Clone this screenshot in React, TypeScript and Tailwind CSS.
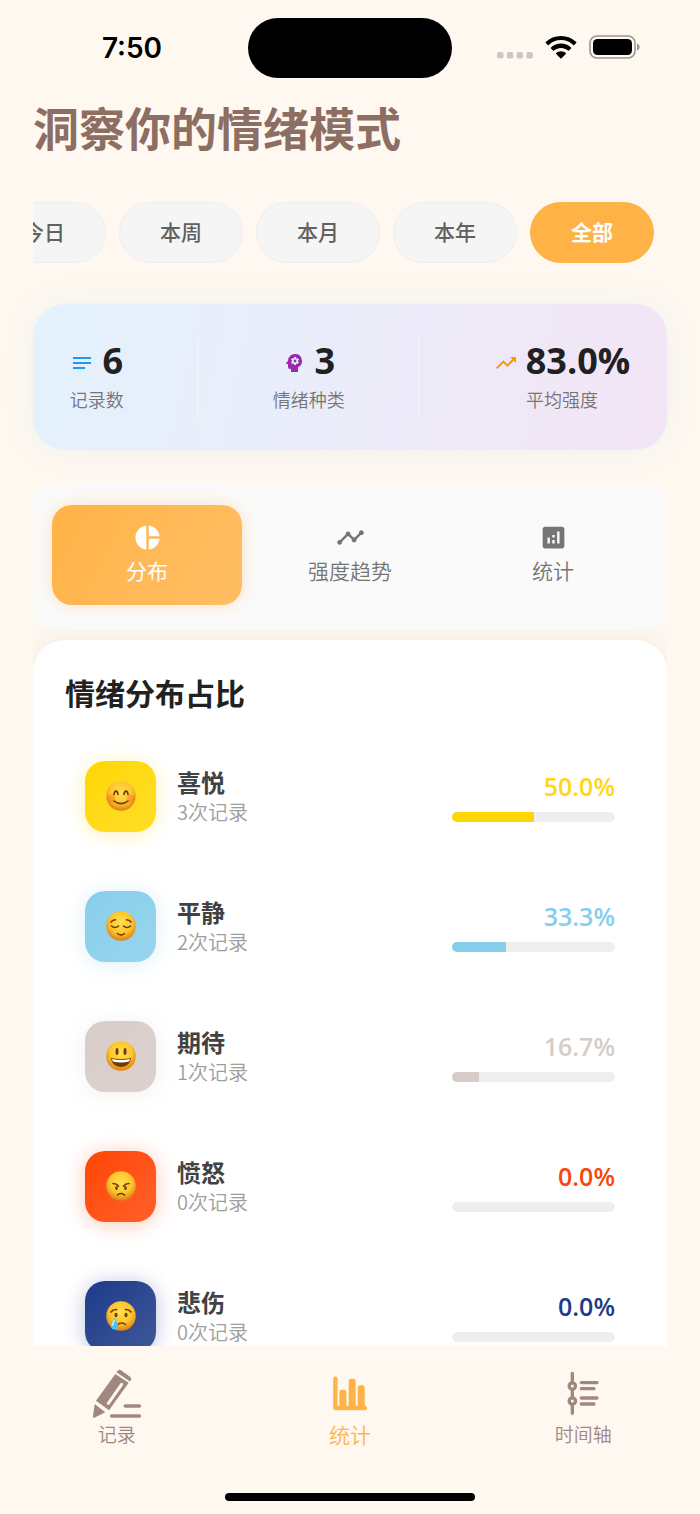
import { useState, type ReactNode } from "react";
import { MdAnalytics, MdNotes, MdPieChart, MdPsychology, MdTimeline, MdTrendingUp } from "react-icons/md";

const periods = ["今日", "本周", "本月", "本年", "全部"];

const tabs = [
  { label: "分布", icon: MdPieChart },
  { label: "强度趋势", icon: MdTimeline },
  { label: "统计", icon: MdAnalytics }
];

type Mood = "joy" | "calm" | "expect" | "angry" | "sad";

const moods: { mood: Mood; name: string; count: number; percent: number; tile: string; bar: string; text: string }[] = [
  {
    mood: "joy",
    name: "喜悦",
    count: 3,
    percent: 50,
    tile: "from-[#ffd700] to-[#ffdd26] shadow-[0_2px_20px_rgba(255,215,0,0.3)]",
    bar: "bg-[#ffd700]",
    text: "text-[#ffd61a]"
  },
  {
    mood: "calm",
    name: "平静",
    count: 2,
    percent: 33.3,
    tile: "from-[#87ceeb] to-[#98d5ee] shadow-[0_2px_20px_rgba(135,206,235,0.3)]",
    bar: "bg-[#87ceeb]",
    text: "text-[#87ceeb]"
  },
  {
    mood: "expect",
    name: "期待",
    count: 1,
    percent: 16.7,
    tile: "from-[#d7ccc8] to-[#dbd2cf] shadow-[0_2px_20px_rgba(215,204,200,0.3)]",
    bar: "bg-[#d7ccc8]",
    text: "text-[#d7ccc8]"
  },
  {
    mood: "angry",
    name: "愤怒",
    count: 0,
    percent: 0,
    tile: "from-[#ff4500] to-[#ff6028] shadow-[0_2px_20px_rgba(255,69,0,0.3)]",
    bar: "bg-[#ff4500]",
    text: "text-[#f8470c]"
  },
  {
    mood: "sad",
    name: "悲伤",
    count: 0,
    percent: 0,
    tile: "from-[#1e3a8a] to-[#405899] shadow-[0_2px_20px_rgba(30,58,138,0.3)]",
    bar: "bg-[#1e3a8a]",
    text: "text-[#1e3a8a]"
  }
];

const faces: Record<Mood, ReactNode> = {
  joy: (
    <>
      <circle cx="5" cy="17.500" r="4" fill="#ff5a1f" stroke="none" opacity="0.35" />
      <circle cx="25" cy="17.500" r="4" fill="#ff5a1f" stroke="none" opacity="0.35" />
      <path d="M8 13.500c.5-4.500 3.500-4.500 4 0M18 13.500c.5-4.500 3.500-4.500 4 0" />
      <path d="M8 20c4 3.500 10 3.500 14 0" />
    </>
  ),
  calm: (
    <>
      <path d="M5 11c1-1.500 2.500-2.200 4.500-2.200M25 11c-1-1.500-2.500-2.200-4.500-2.200" />
      <path d="M5.500 15c2 1.800 5 1.800 7 0M17.500 15c2 1.800 5 1.800 7 0" />
      <path d="M11.500 22.500c2 1.600 5 1.600 7 0" />
    </>
  ),
  expect: (
    <>
      <ellipse cx="11" cy="10.500" rx="1.500" ry="3.500" fill="#6b3b0a" stroke="none" />
      <ellipse cx="19" cy="10.500" rx="1.500" ry="3.500" fill="#6b3b0a" stroke="none" />
      <path d="M5 17c6 1.500 14 1.500 20 0c-.5 5.500-4.500 9-10 9s-9.500-3.500-10-9z" fill="#6b3b0a" stroke="none" />
      <path d="M6 18c6 1.300 12 1.300 18 0l-.8 2.500c-5 1.200-11.400 1.200-16.400 0z" fill="#fff" stroke="none" />
    </>
  ),
  angry: (
    <>
      <path d="M7 12.500c1.800 0 4.200 1 5.500 2.600M23 12.500c-1.800 0-4.200 1-5.500 2.600" />
      <ellipse cx="10.500" cy="17" rx="1.300" ry="2" fill="#6b3b0a" stroke="none" />
      <ellipse cx="19.500" cy="17" rx="1.300" ry="2" fill="#6b3b0a" stroke="none" />
      <path d="M11.500 24c1.800-2 5.200-2 7 0" />
    </>
  ),
  sad: (
    <>
      <path d="M5 11c1.300-1.800 3-2.600 5.500-2.400M25 11c-1.300-1.800-3-2.600-5.500-2.400" />
      <ellipse cx="10" cy="14" rx="1.500" ry="2.200" fill="#6b3b0a" stroke="none" />
      <ellipse cx="20" cy="14" rx="1.500" ry="2.200" fill="#6b3b0a" stroke="none" />
      <path d="M12 23.500c1.800-2 5.500-2 7.500 0" />
      <path d="M8.500 17c-2 3.500-3.700 5.500-3.700 7.700a3.700 3.700 0 0 0 7.400 0c0-2.200-1.700-4.200-3.700-7.700z" fill="#4fc0f4" stroke="none" />
      <path d="M8.300 19.500c-1 2-2 3.500-2 5" stroke="#c8efff" />
    </>
  )
};

function Face({ mood }: { mood: Mood }) {
  return (
    <svg viewBox="0 0 30 30" className="size-[30px]" fill="none" stroke="#6b3b0a" strokeWidth="1.600" strokeLinecap="round" role="img" aria-label={mood}>
      <defs>
        <radialGradient id={`face-${mood}`} cx="0.5" cy="0.38" r="0.62">
          <stop offset="0" stopColor="#ffe04e" />
          <stop offset="0.6" stopColor="#fdc52e" />
          <stop offset="1" stopColor="#de7f12" />
        </radialGradient>
      </defs>
      <circle cx="15" cy="15" r="14.800" fill={`url(#face-${mood})`} stroke="none" />
      {faces[mood]}
    </svg>
  );
}

function StatusBar() {
  return (
    <header className="grid h-24 shrink-0 grid-cols-[1fr_204px_1fr] items-center">
      <div className="pl-4 text-center font-['Inter'] text-[28px] leading-8 font-semibold text-black">7:50</div>
      <div className="h-[60px] rounded-full bg-black" />
      <div className="flex items-center justify-center gap-3 pr-4 pb-0.5">
        <svg viewBox="0 0 36 8" className="mt-4 h-2 w-9" fill="#ccc7c0">
          <rect x="0" y="1" width="6.500" height="6.500" rx="2" />
          <rect x="9.800" y="1" width="6.500" height="6.500" rx="2" />
          <rect x="19.600" y="1" width="6.500" height="6.500" rx="2" />
          <rect x="29.400" y="1" width="6.500" height="6.500" rx="2" />
        </svg>
        <svg viewBox="0 0 32 24" className="h-6 w-8" fill="black">
          <path d="M16 1C10 1 4.700 3.200.8 6.900c-.3.300-.3.700 0 1l2 2c.3.300.7.300 1 0C7 6.900 11.300 5.100 16 5.100s9 1.800 12.200 4.800c.3.300.7.300 1 0l2-2c.3-.3.300-.7 0-1C27.300 3.200 22 1 16 1z" />
          <path d="M16 8.600c-3.900 0-7.400 1.500-10 4-.3.300-.3.700 0 1l2 2c.3.300.7.300 1 0 1.900-1.700 4.300-2.700 7-2.700s5.100 1 7 2.700c.3.300.7.300 1 0l2-2c.3-.3.300-.7 0-1-2.600-2.500-6.100-4-10-4z" />
          <path d="M16 16.200c-1.900 0-3.600.7-4.800 1.900-.3.300-.3.700 0 1l4.200 4.200c.4.300.8.300 1.200 0l4.200-4.200c.3-.3.300-.7 0-1-1.200-1.200-2.900-1.900-4.800-1.900z" />
        </svg>
        <svg viewBox="0 0 51 24" className="h-6 w-[51px]">
          <rect x="1" y="1" width="45" height="22" rx="7" fill="none" stroke="#999590" strokeWidth="1.600" />
          <rect x="4" y="4" width="39" height="16" rx="4.500" fill="black" />
          <path d="M48 8.500c3.500 1 3.500 6 0 7z" fill="#999590" />
        </svg>
      </div>
    </header>
  );
}

function PeriodPicker({ value, onChange }: { value: string; onChange: (period: string) => void }) {
  return (
    <div className="mt-[47px] flex justify-end gap-[13px] overflow-hidden pr-[13px]">
      {periods.map((period) => (
        <button
          key={period}
          type="button"
          aria-pressed={period === value}
          onClick={() => onChange(period)}
          className={`h-[61px] w-[124px] shrink-0 rounded-full border pb-0.5 text-[21px] ${
            period === value
              ? "border-[#ffb347] bg-[#ffb347] font-bold text-white"
              : "border-[#eeeeee] bg-[#f5f5f5] font-medium text-[#616161]"
          }`}
        >
          {period}
        </button>
      ))}
    </div>
  );
}

function Stat({ icon, value, label }: { icon: ReactNode; value: string; label: string }) {
  return (
    <div className="flex flex-col items-center pb-1">
      <div className="flex items-center gap-2">
        <span className="pt-1">{icon}</span>
        <span className="font-['Open_Sans'] text-[36px] leading-[48px] font-bold text-[#212121]">{value}</span>
      </div>
      <div className="text-[18px] leading-7 font-[350] text-[#757575]">{label}</div>
    </div>
  );
}

function Summary() {
  return (
    <section className="mt-[41px] flex h-[146px] items-center justify-around rounded-[32px] bg-linear-[103deg] from-[#e3f2fd] to-[#f3e5f5] shadow-[0_0_32px_rgba(33,150,243,0.08)]">
      <Stat icon={<MdNotes size={24} color="#2196f3" />} value="6" label="记录数" />
      <div className="h-20 w-0.5 bg-white/30" />
      <Stat icon={<MdPsychology size={24} color="#9c27b0" />} value="3" label="情绪种类" />
      <div className="h-20 w-0.5 bg-white/30" />
      <Stat icon={<MdTrendingUp size={24} color="#ff9800" />} value="83.0%" label="平均强度" />
    </section>
  );
}

function MoodRow({ item }: { item: (typeof moods)[number] }) {
  return (
    <li className="flex h-[130px] items-center px-5">
      <div className={`flex size-[71px] shrink-0 items-center justify-center rounded-[20px] bg-linear-to-br ${item.tile}`}>
        <Face mood={item.mood} />
      </div>
      <div className="ml-[21px] flex-1">
        <div className="text-2xl leading-8 font-bold text-[#424242]">{item.name}</div>
        <div className="text-xl leading-7 font-[350] text-[#9e9e9e]">{item.count}次记录</div>
      </div>
      <div className="w-[163px]">
        <div className={`text-right font-['Open_Sans'] text-[25px] leading-8 font-semibold ${item.text}`}>{item.percent.toFixed(1)}%</div>
        <div className="mt-2.5 h-2.5 overflow-hidden rounded-full bg-[#eeeeee]">
          <div className={`h-full ${item.bar}`} style={{ width: `${item.percent}%` }} />
        </div>
      </div>
    </li>
  );
}

function PencilIcon() {
  return (
    <svg viewBox="60 54 162 162" className="size-[54px]" fill="currentColor">
      <path d="M136 75L176 101L117 184L78 155z" />
      <path d="M143 66q4-6 10-2l28 20q5 5 1 11l-3 2L139 70z" />
      <path d="M74 165L106 190L73 206q-5 1-4-5z" />
      <path d="M155 106L115 163" stroke="#fff8f0" strokeWidth="9" strokeLinecap="round" />
      <path d="M166 171H208M125 201H208" stroke="currentColor" strokeWidth="11" strokeLinecap="round" />
    </svg>
  );
}

function BarsIcon() {
  return (
    <svg viewBox="69 54 162 162" className="size-[54px]" fill="currentColor">
      <path d="M106 89V177H195" fill="none" stroke="currentColor" strokeWidth="13" strokeLinecap="round" strokeLinejoin="round" />
      <path d="M118 174V129q0-7 7-7h7q7 0 7 7v45zM146 174V96q0-7 7-7h7q7 0 7 7v78zM173 174V116q0-7 7-7h7q7 0 7 7v58z" />
    </svg>
  );
}

function TimelineIcon() {
  return (
    <svg viewBox="768 54 162 162" className="size-[54px]" fill="none" stroke="currentColor" strokeWidth="10" strokeLinecap="round">
      <path d="M817 73V97M817 124V143M817 169V193" />
      <circle cx="817" cy="111" r="9.500" />
      <circle cx="817" cy="156" r="9.500" />
      <path d="M844 101H891M844 119H882M844 147H891M844 165H882" />
    </svg>
  );
}

function NavItem({ icon, label, active = false }: { icon: ReactNode; label: string; active?: boolean }) {
  return (
    <a
      href="#"
      aria-current={active ? "page" : undefined}
      className={`flex flex-1 flex-col items-center font-[350] ${active ? "text-[21px] text-[#ffb347]" : "text-[19px] text-[#a1887f]"}`}
    >
      {icon}
      <span className="leading-[26px]">{label}</span>
    </a>
  );
}

export default function App() {
  const [period, setPeriod] = useState("全部");
  const [tab, setTab] = useState("分布");

  return (
    <div className="flex h-screen flex-col overflow-hidden bg-[#fff8f0] font-['Noto_Sans_CJK_SC',sans-serif]">
      <StatusBar />
      <main className="flex min-h-0 flex-1 flex-col px-[33px] pt-px">
        <h1 className="text-[46px] leading-[58px] font-bold text-[#8d6e63]">洞察你的情绪模式</h1>
        <PeriodPicker value={period} onChange={setPeriod} />
        <Summary />
        <div role="tablist" className="mt-[34px] flex gap-[13px] rounded-[20px] bg-[#fafafa] px-[19px] pt-[21px] pb-6">
          {tabs.map(({ label, icon: Icon }) => (
            <button
              key={label}
              type="button"
              role="tab"
              aria-selected={label === tab}
              onClick={() => setTab(label)}
              className={`flex h-[100px] flex-1 flex-col items-center justify-center gap-0.5 rounded-[20px] pb-0.5 text-[21px] leading-8 ${
                label === tab
                  ? "bg-linear-[118deg] from-[#ffb347] to-[#ffbe64] font-normal text-white shadow-[0_0_16px_rgba(255,179,71,0.3)]"
                  : "font-[350] text-[#757575]"
              }`}
            >
              <Icon size={29} />
              {label}
            </button>
          ))}
        </div>
        <div className="min-h-0 flex-1 overflow-hidden pt-[11px]">
          <section className="rounded-t-[32px] bg-white px-8 py-[30px] shadow-[0_0_32px_rgba(0,0,0,0.06)]">
            <h2 className="text-[30px] leading-11 font-bold text-[#212121]">情绪分布占比</h2>
            <ul className="mt-[17px]">
              {moods.map((item) => (
                <MoodRow key={item.mood} item={item} />
              ))}
            </ul>
          </section>
        </div>
      </main>
      <nav className="flex h-[168px] shrink-0 flex-col justify-between pt-[21px] pb-[13px]">
        <div className="flex">
          <NavItem icon={<PencilIcon />} label="记录" />
          <NavItem icon={<BarsIcon />} label="统计" active />
          <NavItem icon={<TimelineIcon />} label="时间轴" />
        </div>
        <div className="mx-auto h-2 w-[250px] rounded-full bg-black" />
      </nav>
    </div>
  );
}
